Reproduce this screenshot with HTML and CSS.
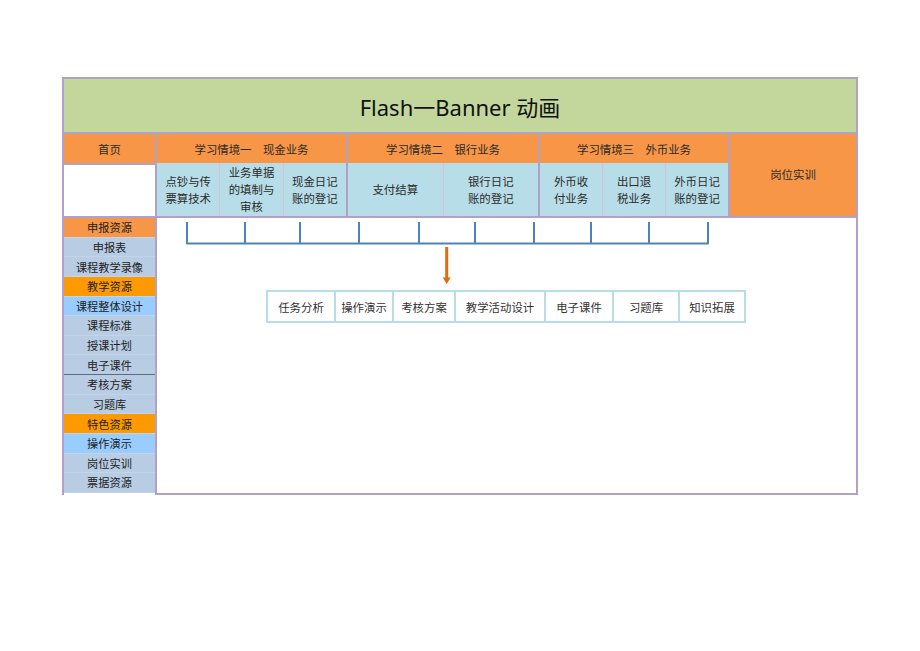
FILE: index.html
```html
<!DOCTYPE html>
<html lang="zh">
<head>
<meta charset="utf-8">
<title>Flash一Banner 动画</title>
<link rel="stylesheet" href="styles.css">
</head>
<body>
<div class="frame">
  <div class="title">Flash一Banner 动画</div>
  <div class="nav">
    <div class="home-col">
      <div class="home">首页</div>
      <div class="blank"></div>
    </div>
    <div class="sect">
      <div class="sect-head">学习情境一　现金业务</div>
      <div class="subs">
        <div class="sub">点钞与传<br>票算技术</div>
        <div class="sub">业务单据<br>的填制与<br>审核</div>
        <div class="sub">现金日记<br>账的登记</div>
      </div>
    </div>
    <div class="sect">
      <div class="sect-head">学习情境二　银行业务</div>
      <div class="subs">
        <div class="sub">支付结算</div>
        <div class="sub">银行日记<br>账的登记</div>
      </div>
    </div>
    <div class="sect">
      <div class="sect-head">学习情境三　外币业务</div>
      <div class="subs">
        <div class="sub">外币收<br>付业务</div>
        <div class="sub">出口退<br>税业务</div>
        <div class="sub">外币日记<br>账的登记</div>
      </div>
    </div>
    <div class="post">岗位实训</div>
  </div>
  <div class="lower">
    <ul class="side">
      <li class="orange">申报资源</li>
      <li>申报表</li>
      <li>课程教学录像</li>
      <li class="bright">教学资源</li>
      <li class="sky">课程整体设计</li>
      <li>课程标准</li>
      <li>授课计划</li>
      <li class="split">电子课件</li>
      <li>考核方案</li>
      <li>习题库</li>
      <li class="bright">特色资源</li>
      <li class="sky">操作演示</li>
      <li>岗位实训</li>
      <li>票据资源</li>
    </ul>
    <div class="main">
      <svg class="diagram" width="699" height="72" viewBox="0 0 699 72">
        <g fill="none" stroke="#4f81bd" stroke-width="2" stroke-linejoin="round">
          <path d="M30 4 V25.5 H551 V4"/>
          <path d="M88 4 V25.5 M143 4 V25.5 M202 4 V25.5 M262 4 V25.5 M318 4 V25.5 M377 4 V25.5 M434 4 V25.5 M492 4 V25.5"/>
        </g>
        <path d="M289.7 29 V60" stroke="#e36c0a" stroke-width="3"/>
        <path d="M285.7 59.5 H293.7 L289.7 66 Z" fill="#e36c0a"/>
      </svg>
      <div class="tabs">
        <div class="tab">任务分析</div>
        <div class="tab">操作演示</div>
        <div class="tab">考核方案</div>
        <div class="tab">教学活动设计</div>
        <div class="tab">电子课件</div>
        <div class="tab">习题库</div>
        <div class="tab">知识拓展</div>
      </div>
    </div>
  </div>
</div>
</body>
</html>
```

FILE: styles.css
```css
* { box-sizing: border-box; }
html, body { margin: 0; padding: 0; background: #ffffff; }
body {
  font-family: "Noto Sans CJK SC", sans-serif;
  color: #2b2b2b;
  font-size: 11.4px;
}
.frame {
  margin: 77px 0 0 62px;
  width: 796px;
  border: 2px solid #b2a1c7;
  border-bottom: none;
  background: #b2a1c7;
  display: flex;
  flex-direction: column;
  gap: 2px;
}
.title {
  height: 53px;
  background: #c3d69b;
  display: flex;
  align-items: center;
  justify-content: center;
  font-family: "Noto Sans", "Noto Sans CJK SC", sans-serif;
  font-size: 22px;
  color: #111;
  padding-top: 1px;
}
.nav {
  height: 82px;
  display: grid;
  grid-template-columns: 91px 189px 190px 188px 126px;
  column-gap: 2px;
}
.home-col {
  display: flex;
  flex-direction: column;
  gap: 2px;
}
.home {
  height: 29px;
  background: #f79646;
  display: flex;
  align-items: center;
  justify-content: center;
}
.blank { flex: 1; background: #ffffff; }
.sect { display: flex; flex-direction: column; }
.sect-head {
  height: 29px;
  background: #f79646;
  display: flex;
  align-items: center;
  justify-content: center;
}
.subs {
  flex: 1;
  display: flex;
  background: #b7dde8;
}
.sub {
  flex: 1;
  display: flex;
  align-items: center;
  justify-content: center;
  text-align: center;
  line-height: 16.7px;
  border-left: 1px solid #d4c2dc;
}
.sub:first-child { border-left: none; }
.post {
  background: #f79646;
  display: flex;
  align-items: center;
  justify-content: center;
  padding-bottom: 2px;
}
.lower {
  display: flex;
  align-items: flex-start;
  background: #ffffff;
}
.side {
  list-style: none;
  margin: 0;
  padding: 0;
  width: 91px;
  flex: none;
  background: #b8cce4;
}
.side li {
  height: 19.64px;
  display: flex;
  align-items: center;
  justify-content: center;
  border-bottom: 1px solid #c4d4e8;
  color: #222;
  font-size: 11.2px;
}
.side li.orange { background: #f79646; }
.side li.bright { background: #ff9900; }
.side li.sky { background: #99ccff; }
.side li.split { border-bottom: 1px solid #5f6b7a; }
.main {
  flex: 1;
  height: 277px;
  border-left: 2px solid #b2a1c7;
  border-bottom: 2px solid #b2a1c7;
  display: flex;
  flex-direction: column;
  align-items: flex-start;
}
.diagram { display: block; }
.tabs {
  margin-left: 109px;
  display: grid;
  grid-template-columns: 66px 56px 60px 88px 66px 64px 64px;
  gap: 2px;
  padding: 2px;
  background: #b7dde8;
}
.tab {
  height: 29px;
  background: #ffffff;
  display: flex;
  align-items: center;
  justify-content: center;
  color: #333;
}
```
